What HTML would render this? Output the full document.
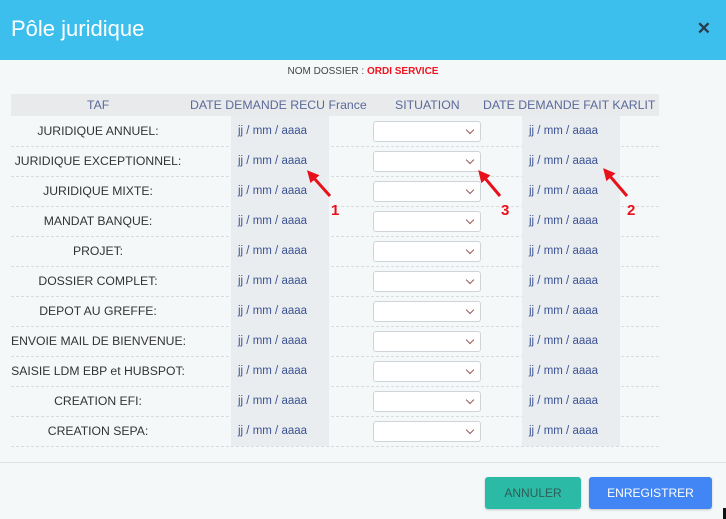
<!DOCTYPE html>
<html><head><meta charset="utf-8"><style>
body{margin:0;width:726px;height:519px;background:#f5f8f9;font-family:"Liberation Sans",sans-serif;position:relative;overflow:hidden}
.hdr{position:absolute;left:0;top:0;width:726px;height:60px;background:#3dbfed;}
.hdr .t{position:absolute;left:11px;top:16px;color:#fff;font-size:22px}
.hdr .x{position:absolute;right:15px;top:19px;color:#2b3a4a;font-size:17px;font-weight:bold}
.nd{position:absolute;top:66px;left:0;width:726px;text-align:center;font-size:10px;color:#444}
.nd b{color:#f0131e}
.th{position:absolute;left:11px;top:94px;width:648px;height:22px;background:#e9eaeb;color:#5a6a9a;font-size:12.3px}
.th span{position:absolute;top:4px;white-space:nowrap}
.row{position:absolute;left:11px;width:648px;height:30px;border-bottom:1px dashed #d8dcde}
.lab{position:absolute;left:0;width:174px;text-align:center;top:8px;font-size:12.2px;color:#333;white-space:nowrap}
.d{position:absolute;top:0;width:98px;height:30px;background:#eaedef;color:#3b5394;font-size:11.5px;line-height:31px;box-sizing:border-box;padding-left:7px}
.s{position:absolute;left:362px;top:5px;width:108px;height:21px;background:#fff;border:1px solid #cfd4d8;border-radius:3px;box-sizing:border-box}
.s:after{content:"";position:absolute;right:7px;top:5px;width:5px;height:5px;border-right:1.5px solid #9a5b5b;border-bottom:1.5px solid #9a5b5b;transform:rotate(45deg)}
.line{position:absolute;left:0;top:462px;width:726px;border-top:1px solid #dde1e3}
.b{position:absolute;top:477px;height:32px;border-radius:3px;font-size:12px;text-align:center;line-height:32px;box-shadow:0 1px 2px rgba(0,0,0,.2)}
</style></head><body>
<div class="hdr"><div class="t">Pôle juridique</div><div class="x">✕</div></div>
<div class="nd">NOM DOSSIER : <b>ORDI SERVICE</b></div>
<div class="th"><span style="left:76px">TAF</span><span style="left:179px">DATE DEMANDE RECU France</span><span style="left:384px">SITUATION</span><span style="left:472px">DATE DEMANDE FAIT KARLIT</span></div>
<div id="rows"></div>
<script>
var L=["JURIDIQUE ANNUEL:","JURIDIQUE EXCEPTIONNEL:","JURIDIQUE MIXTE:","MANDAT BANQUE:","PROJET:","DOSSIER COMPLET:","DEPOT AU GREFFE:","ENVOIE MAIL DE BIENVENUE:","SAISIE LDM EBP et HUBSPOT:","CREATION EFI:","CREATION SEPA:"];
var h="";L.forEach(function(l,i){h+='<div class="row" style="top:'+(116+i*30)+'px"><div class="lab">'+l+'</div><div class="d" style="left:220px">jj / mm / aaaa</div><div class="s"></div><div class="d" style="left:511px">jj / mm / aaaa</div></div>'});
document.getElementById("rows").innerHTML=h;
</script>
<div class="line"></div>
<div class="b" style="left:485px;width:96px;background:#2bbaa5;color:#2f5d5a">ANNULER</div>
<div class="b" style="left:589px;width:123px;background:#4285f4;color:#fff">ENREGISTRER</div>
<div style="position:absolute;left:723px;top:508px;width:3px;height:11px;background:#111"></div>
<svg style="position:absolute;left:0;top:0" width="726" height="519">
<defs><marker id="a" markerWidth="4" markerHeight="4" refX="1" refY="2" orient="auto"><path d="M0,0L4,2L0,4z" fill="#e8101b"/></marker></defs>
<g stroke="#e8101b" stroke-width="3" marker-end="url(#a)"><line x1="330" y1="196" x2="313" y2="177"/><line x1="500" y1="196" x2="484" y2="177"/><line x1="627" y1="196" x2="609" y2="175"/></g>
<g fill="#e8101b" font-family="Liberation Sans" font-weight="bold" font-size="15"><text x="331" y="215">1</text><text x="501" y="215">3</text><text x="627" y="215">2</text></g>
</svg>
</body></html>
